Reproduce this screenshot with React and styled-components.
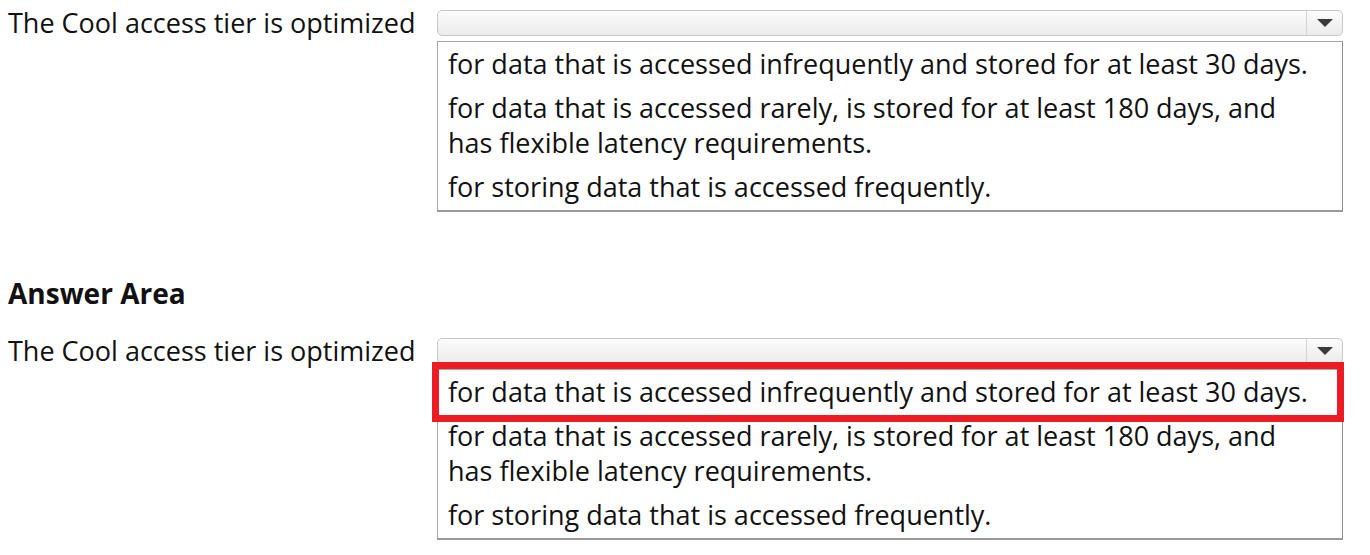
import React from "react";
import styled, { createGlobalStyle } from "styled-components";

const GlobalStyle = createGlobalStyle`
  body {
    margin: 0;
    background: #ffffff;
    font-family: "Open Sans", "Noto Sans", sans-serif;
    color: #111111;
  }
`;

const Page = styled.div`
  width: 1370px;
  padding: 10px 0 0 8px;
  box-sizing: border-box;
`;

const Row = styled.div`
  display: grid;
  grid-template-columns: 429px 906px;
  align-items: start;
`;

const Label = styled.div`
  font-size: 27px;
  line-height: 26px;
  white-space: nowrap;
`;

const Field = styled.div`
  display: flex;
  flex-direction: column;
  gap: 5px;
`;

const Select = styled.div`
  height: 26px;
  box-sizing: border-box;
  border: 1px solid #c8c8c8;
  border-radius: 5px;
  background: linear-gradient(#fbfbfb, #ececec);
  display: flex;
  justify-content: flex-end;
`;

const Arrow = styled.div`
  width: 35px;
  border-left: 1px solid #d4d4d4;
  display: flex;
  align-items: center;
  justify-content: center;
  &::after {
    content: "";
    border-left: 8px solid transparent;
    border-right: 8px solid transparent;
    border-top: 8px solid #3a3a3a;
  }
`;

const List = styled.div`
  height: 171px;
  box-sizing: border-box;
  border: 1px solid #a8a8a8;
  border-right-color: #8f8f8f;
  border-bottom: 2px solid #9a9a9a;
  background: #ffffff;
`;

const Option = styled.div`
  position: relative;
  font-size: 27px;
  line-height: 35px;
  padding: 4px 10px 5px 10px;
`;

const OptionText = styled.span`
  display: block;
  max-width: 868px;
`;

const Highlight = styled.div`
  position: absolute;
  top: -8px;
  bottom: -8px;
  left: -6px;
  right: -2px;
  border: 7px solid #ed1c24;
  pointer-events: none;
`;

const Heading = styled.h2`
  margin: 66px 0 30px 0;
  font-size: 28px;
  line-height: 30px;
  font-weight: 700;
`;

const options = [
  "for data that is accessed infrequently and stored for at least 30 days.",
  "for data that is accessed rarely, is stored for at least 180 days, and has flexible latency requirements.",
  "for storing data that is accessed frequently.",
];

function Question({ marked }) {
  return (
    <Row>
      <Label>The Cool access tier is optimized</Label>
      <Field>
        <Select>
          <Arrow />
        </Select>
        <List>
          {options.map((text, index) => (
            <Option key={index}>
              <OptionText>{text}</OptionText>
              {index === marked && <Highlight />}
            </Option>
          ))}
        </List>
      </Field>
    </Row>
  );
}

export default function App() {
  return (
    <Page>
      <GlobalStyle />
      <Question marked={-1} />
      <Heading>Answer Area</Heading>
      <Question marked={0} />
    </Page>
  );
}
